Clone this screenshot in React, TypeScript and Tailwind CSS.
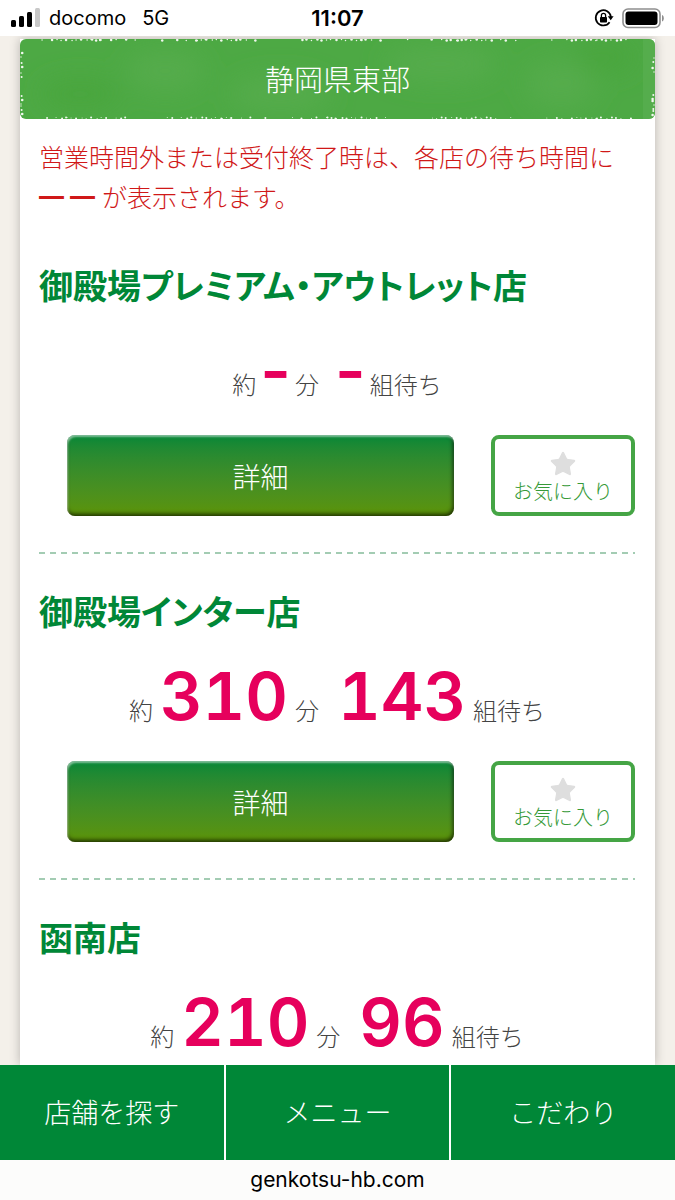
import { Star } from 'lucide-react'

interface Shop {
  name: string
  minutes: string
  groups: string
}

const shops: Shop[] = [
  { name: '御殿場プレミアム・アウトレット店', minutes: '-', groups: '-' },
  { name: '御殿場インター店', minutes: '310', groups: '143' },
  { name: '函南店', minutes: '210', groups: '96' }
]

const navItems = ['店舗を探す', 'メニュー', 'こだわり']

// [x, y, radius] of the chips along the rough edge of the banner
const chips: number[][] = []
for (let i = 0; i < 170; i++) {
  const x = (i * 97 + (i % 7) * 13 + (i % 11) * 5) % 634
  const r = 0.5 + (i % 4) * 0.25
  chips.push([x, i % 2 ? 0.6 + (i % 3) * 0.4 : 79.4 - (i % 3) * 0.5, r])
}
for (let i = 0; i < 24; i++) {
  const y = (i * 31 + (i % 5) * 7) % 80
  chips.push([i % 2 ? 1 + (i % 3) * 0.6 : 633 - (i % 3) * 0.7, y, 0.7 + (i % 3) * 0.3])
}

function StatusBar() {
  return (
    <header className="grid h-9 shrink-0 grid-cols-3 items-center bg-white px-[11px] text-xl text-black">
      <div className="flex items-center gap-2">
        <svg width="30" height="20" viewBox="0 0 30 20" aria-hidden="true">
          <rect x="0" y="12" width="5" height="7" rx="1.5" />
          <rect x="8" y="8" width="5" height="11" rx="1.5" />
          <rect x="16" y="4" width="5" height="15" rx="1.5" />
          <rect x="24" y="0" width="5" height="19" rx="1.5" fill="#c8c8c8" />
        </svg>
        <span>docomo</span>
        <span className="ml-2">5G</span>
      </div>
      <time className="text-center text-[22px] font-semibold">11:07</time>
      <div className="flex items-center justify-end gap-2">
        <svg width="20" height="20" viewBox="0 0 20 20" fill="none" stroke="#000" aria-hidden="true">
          <path d="M15.6 14.2A7.6 7.6 0 1 1 16.9 9" strokeWidth="1.7" />
          <path d="M13.8 8.3h5.8l-2.9 4z" fill="#000" stroke="none" />
          <rect x="6" y="9" width="7" height="5.5" rx="0.8" fill="#000" stroke="none" />
          <path d="M7.4 9.2V7.5a2.1 2.1 0 0 1 4.2 0v1.7" strokeWidth="1.3" />
        </svg>
        <svg width="42" height="21" viewBox="0 0 42 21" aria-hidden="true">
          <rect x="1" y="1" width="37" height="18.5" rx="5" fill="none" stroke="#8e8e8e" strokeWidth="1.6" />
          <rect x="3.5" y="3.5" width="32" height="13.5" rx="3" />
          <path d="M40 7v6.500c1.400-.6 1.800-1.800 1.800-3.200s-.4-2.700-1.800-3.300z" fill="#8e8e8e" />
        </svg>
      </div>
    </header>
  )
}

function AreaBanner({ title }: { title: string }) {
  return (
    <div className="relative flex h-20 items-center justify-center overflow-hidden rounded-md bg-[#4da944] pt-1">
      <svg
        className="absolute inset-0 h-full w-full"
        viewBox="0 0 634 80"
        preserveAspectRatio="none"
        aria-hidden="true"
      >
        <filter id="soft">
          <feGaussianBlur stdDeviation="12" />
        </filter>
        <g filter="url(#soft)">
          <ellipse cx="145" cy="32" rx="38" ry="20" fill="#54ac4c" />
          <ellipse cx="260" cy="55" rx="50" ry="18" fill="#54ac4c" />
          <ellipse cx="420" cy="25" rx="55" ry="18" fill="#54ac4c" />
          <ellipse cx="540" cy="45" rx="35" ry="24" fill="#54ac4c" />
          <ellipse cx="585" cy="18" rx="30" ry="16" fill="#48a63d" />
          <ellipse cx="60" cy="55" rx="40" ry="16" fill="#48a63d" />
        </g>
        <rect x="622" width="12" height="80" fill="#5bb054" opacity="0.6" />
        {chips.map(([x, y, r], i) => (
          <circle key={i} cx={x} cy={y} r={r} fill="#f1f8ef" />
        ))}
      </svg>
      <h1 className="relative text-[29px] font-light text-white">{title}</h1>
    </div>
  )
}

function Count({ value }: { value: string }) {
  // a closed shop shows a bare dash, set tighter than the digits
  const spacing = value === '-' ? 'mx-1 proportional-nums' : 'mx-[7px] tabular-nums'
  return (
    <strong className={`font-[Inter] text-[66px] font-semibold text-[#e6005c] ${spacing}`}>{value}</strong>
  )
}

function WaitTime({ minutes, groups }: { minutes: string; groups: string }) {
  return (
    <p className="mt-[23px] flex h-20 items-baseline justify-center text-2xl leading-[80px] font-light text-[#444]">
      <span>約</span>
      <Count value={minutes} />
      <span className="mr-3">分</span>
      <Count value={groups} />
      <span>組待ち</span>
    </p>
  )
}

function ShopActions() {
  return (
    <div className="mt-[25px] mb-9 flex h-[81px] gap-[37px] pl-7">
      <button
        type="button"
        className="flex-1 rounded-lg bg-linear-to-b from-[#008737] to-[#5c9404] pt-1 text-[28px] font-light text-white shadow-[inset_1px_2px_2px_rgba(255,255,255,0.5),inset_-1px_-2px_4px_rgba(0,0,0,0.7)]"
      >
        詳細
      </button>
      <button
        type="button"
        className="flex w-36 flex-col items-center justify-center rounded-lg border-4 border-[#45a545] bg-white pt-1 text-xl leading-7 font-light text-[#369a38]"
      >
        <Star className="h-7 w-7 fill-[#dedede] text-[#dedede]" strokeWidth={1} />
        お気に入り
      </button>
    </div>
  )
}

export default function App() {
  return (
    <div className="flex h-dvh flex-col bg-[#f4f0ea] font-[Inter,'Noto_Sans_CJK_JP',sans-serif]" lang="ja">
      <StatusBar />

      <main className="flex min-h-0 flex-1 flex-col overflow-hidden px-5 pt-[3px]">
        <div className="flex-1 bg-white shadow-[0_0_10px_rgba(0,0,0,0.25)]">
          <AreaBanner title="静岡県東部" />

          <div className="pt-[19px] pr-5 pl-[19px]">
            <p className="mb-3 text-[25px] leading-10 font-light text-[#d01818]">
              営業時間外または受付終了時は、各店の待ち時間に
              <b className="font-bold">━ ━</b> が表示されます。
            </p>

            {shops.map((shop, i) => (
              <section key={shop.name}>
                <h2 className="pt-[37px] text-[34px] leading-10 font-bold text-[#008737] [font-feature-settings:'palt']">
                  {shop.name}
                </h2>
                <WaitTime minutes={shop.minutes} groups={shop.groups} />
                {i < shops.length - 1 && (
                  <>
                    <ShopActions />
                    <svg className="block h-1 w-full" aria-hidden="true">
                      <line x1="0" y1="1" x2="100%" y2="1" stroke="#a3ccb3" strokeWidth="2" strokeDasharray="6 5" />
                    </svg>
                  </>
                )}
              </section>
            ))}
          </div>
        </div>
      </main>

      <nav className="relative grid h-[95px] shrink-0 grid-cols-3 gap-0.5 bg-white text-[27px] font-light text-white">
        {navItems.map((item) => (
          <a key={item} href="#" className="flex items-center justify-center bg-[#008737] pt-1">
            {item}
          </a>
        ))}
      </nav>
      <footer className="flex h-10 shrink-0 items-center justify-center bg-[#fcfcfb] text-[21px] text-black">
        genkotsu-hb.com
      </footer>
    </div>
  )
}
